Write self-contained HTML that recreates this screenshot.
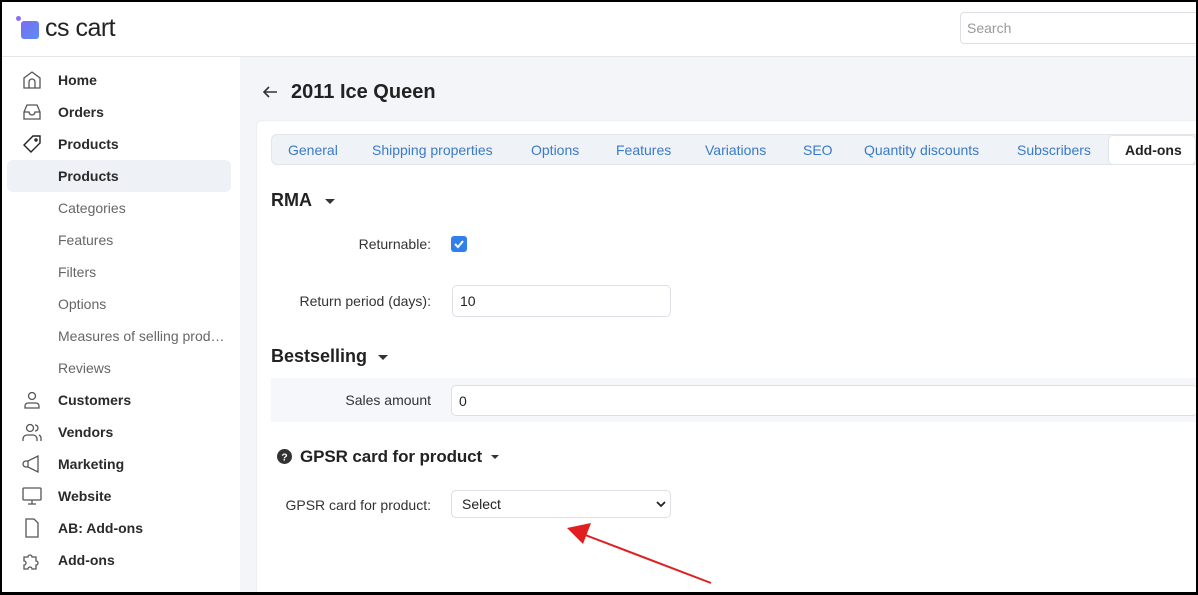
<!DOCTYPE html>
<html><head><meta charset="utf-8"><style>
*{box-sizing:border-box;margin:0;padding:0}
body{width:1198px;height:595px;overflow:hidden;position:relative;background:#fff;font-family:"Liberation Sans",sans-serif;color:#222}
.a{position:absolute}
.frame{position:absolute;left:0;top:0;width:1198px;height:595px;border:2px solid #000;border-bottom-width:3px;pointer-events:none;z-index:10}
.nav{font-size:14px;font-weight:bold;color:#2a2a2a}
.sub{font-size:14px;color:#666}
.ic{position:absolute;left:22px}
.tab{position:absolute;top:142px;font-size:14px;color:#3a7bc8}
.lbl{font-size:14px;color:#333;text-align:right}
.inp{position:absolute;background:#fff;border:1px solid #dcdfe4;border-radius:5px;font-size:14px;padding-left:7px;color:#222}
</style></head><body>
<div class="frame"></div>
<div class="a" style="left:0;top:0;width:1198px;height:57px;border-bottom:1px solid #e4e6ea;background:#fff"></div>
<div class="a" style="left:16px;top:16px;width:5px;height:5px;border-radius:50%;background:#8a6ff0"></div>
<div class="a" style="left:21px;top:21px;width:18px;height:18px;border-radius:3px;background:linear-gradient(135deg,#7b6cf2,#5b8cf5)"></div>
<div class="a" style="left:45px;top:14px;font-size:25px;color:#222;letter-spacing:-0.5px">cs cart</div>
<div class="a" style="left:960px;top:12px;width:240px;height:32px;border:1px solid #dcdfe4;border-radius:4px;font-size:14px;color:#999;padding:7px 6px">Search</div>
<div class="a" style="left:240px;top:57px;width:958px;height:538px;background:#f4f5f8"></div>
<div class="a" style="left:7px;top:160px;width:224px;height:32px;border-radius:6px;background:#eef1f5"></div>
<svg class="ic" style="top:70px" width="20" height="20" viewBox="0 0 20 20" fill="none" stroke="#555" stroke-width="1.3"><path d="M2 8L10 2l8 6v10H2z"/><path d="M7 18v-6a3 3 0 0 1 6 0v6"/></svg>
<svg class="ic" style="top:102px" width="20" height="20" viewBox="0 0 20 20" fill="none" stroke="#555" stroke-width="1.3"><path d="M5 3h10l3 7v7H2v-7z"/><path d="M2 10h5a3 3 0 0 0 6 0h5"/></svg>
<svg class="ic" style="top:134px" width="20" height="20" viewBox="0 0 20 20" fill="none" stroke="#222" stroke-width="1.4"><path d="M11 2h7v7l-9 9-7-7z"/><circle cx="14" cy="6" r="1"/></svg>
<svg class="ic" style="top:390px" width="20" height="20" viewBox="0 0 20 20" fill="none" stroke="#555" stroke-width="1.3"><circle cx="10" cy="6" r="3.5"/><path d="M3 18v-2a3 3 0 0 1 3-3h8a3 3 0 0 1 3 3v2z"/></svg>
<svg class="ic" style="top:422px" width="20" height="20" viewBox="0 0 20 20" fill="none" stroke="#555" stroke-width="1.3"><circle cx="8" cy="6" r="3.5"/><path d="M1 19v-2a4 4 0 0 1 4-4h6a4 4 0 0 1 4 4v2M13 3a3 3 0 0 1 0 6M17 13a4 4 0 0 1 2 4v2"/></svg>
<svg class="ic" style="top:454px" width="20" height="20" viewBox="0 0 20 20" fill="none" stroke="#555" stroke-width="1.3"><path d="M6 7h-2a3 3 0 0 0 0 6h2l10 5V2z"/><path d="M6 7v6"/></svg>
<svg class="ic" style="top:486px" width="20" height="20" viewBox="0 0 20 20" fill="none" stroke="#555" stroke-width="1.3"><rect x="1" y="2" width="18" height="12" rx="1"/><path d="M10 14v4M6 18h8"/></svg>
<svg class="ic" style="top:518px" width="20" height="20" viewBox="0 0 20 20" fill="none" stroke="#555" stroke-width="1.3"><path d="M4 1h8l4 4v14H4z"/></svg>
<svg class="ic" style="top:550px" width="20" height="20" viewBox="0 0 20 20" fill="none" stroke="#555" stroke-width="1.3"><path d="M2 7h4a2 2 0 1 1 4 0h4v4a2 2 0 1 1 0 4v4h-4a2 2 0 1 0-4 0H2v-4a2 2 0 1 0 0-4z"/></svg>
<div class="a nav" style="left:58px;top:72px">Home</div>
<div class="a nav" style="left:58px;top:104px">Orders</div>
<div class="a nav" style="left:58px;top:136px">Products</div>
<div class="a nav" style="left:58px;top:168px">Products</div>
<div class="a sub" style="left:58px;top:200px">Categories</div>
<div class="a sub" style="left:58px;top:232px">Features</div>
<div class="a sub" style="left:58px;top:264px">Filters</div>
<div class="a sub" style="left:58px;top:296px">Options</div>
<div class="a sub" style="left:58px;top:328px">Measures of selling prod…</div>
<div class="a sub" style="left:58px;top:360px">Reviews</div>
<div class="a nav" style="left:58px;top:392px">Customers</div>
<div class="a nav" style="left:58px;top:424px">Vendors</div>
<div class="a nav" style="left:58px;top:456px">Marketing</div>
<div class="a nav" style="left:58px;top:488px">Website</div>
<div class="a nav" style="left:58px;top:520px">AB: Add-ons</div>
<div class="a nav" style="left:58px;top:552px">Add-ons</div>
<svg class="a" style="left:262px;top:84px" width="16" height="16" viewBox="0 0 16 16" fill="none" stroke="#333" stroke-width="1.6"><path d="M15 8H2M7 3L2 8l5 5"/></svg>
<div class="a" style="left:291px;top:81px;font-size:20px;font-weight:bold;color:#222">2011 Ice Queen</div>
<div class="a" style="left:256px;top:120px;width:942px;height:475px;background:#fff;border-radius:6px 0 0 0;border:1px solid #eceef2"></div>
<div class="a" style="left:271px;top:134px;width:927px;height:31px;background:#eff2f6;border:1px solid #e2e6eb;border-radius:6px 0 0 6px"></div>
<div class="a" style="left:1108px;top:135px;width:88px;height:30px;background:#fff;border:1px solid #e2e6eb;border-radius:5px"></div>
<div class="tab" style="left:288px">General</div>
<div class="tab" style="left:372px">Shipping properties</div>
<div class="tab" style="left:531px">Options</div>
<div class="tab" style="left:616px">Features</div>
<div class="tab" style="left:705px">Variations</div>
<div class="tab" style="left:803px">SEO</div>
<div class="tab" style="left:864px">Quantity discounts</div>
<div class="tab" style="left:1017px">Subscribers</div>
<div class="tab" style="left:1125px;color:#222;font-weight:bold">Add-ons</div>
<div class="a" style="left:271px;top:190px;font-size:18px;font-weight:bold">RMA</div>
<div class="a" style="left:325px;top:199px;border:5px solid transparent;border-top-color:#333;border-bottom:0"></div>
<div class="a lbl" style="left:280px;top:236px;width:151px">Returnable:</div>
<div class="a" style="left:451px;top:236px;width:16px;height:16px;background:#2f80ed;border-radius:3px"></div>
<svg class="a" style="left:451px;top:236px" width="16" height="16" viewBox="0 0 16 16" fill="none" stroke="#fff" stroke-width="2"><path d="M4 8l3 3 5-6"/></svg>
<div class="a lbl" style="left:280px;top:293px;width:151px">Return period (days):</div>
<div class="inp" style="left:452px;top:285px;width:219px;height:32px;padding-top:7px">10</div>
<div class="a" style="left:271px;top:346px;font-size:18px;font-weight:bold">Bestselling</div>
<div class="a" style="left:378px;top:355px;border:5px solid transparent;border-top-color:#333;border-bottom:0"></div>
<div class="a" style="left:271px;top:378px;width:927px;height:44px;background:#f5f7fa"></div>
<div class="a lbl" style="left:280px;top:392px;width:151px">Sales amount</div>
<div class="inp" style="left:451px;top:385px;width:747px;height:31px;padding-top:7px">0</div>
<svg class="a" style="left:277px;top:449px" width="15" height="15" viewBox="0 0 16 16"><circle cx="8" cy="8" r="8" fill="#333"/><text x="8" y="12" font-size="11" font-weight="bold" fill="#fff" text-anchor="middle" font-family="Liberation Sans">?</text></svg>
<div class="a" style="left:300px;top:447px;font-size:17px;font-weight:bold;letter-spacing:-0.1px">GPSR card for product</div>
<div class="a" style="left:491px;top:455px;border:4px solid transparent;border-top-color:#333;border-bottom:0"></div>
<div class="a lbl" style="left:260px;top:497px;width:171px">GPSR card for product:</div>
<div class="inp" style="left:451px;top:490px;width:220px;height:28px;padding:5px 10px">Select</div>
<svg class="a" style="left:656px;top:500px" width="10" height="8" viewBox="0 0 10 8" fill="none" stroke="#222" stroke-width="1.8"><path d="M1 2l4 4 4-4"/></svg>
<svg class="a" style="left:560px;top:520px" width="160" height="70" viewBox="0 0 160 70"><path d="M151 63L20 13" stroke="#e02020" stroke-width="2"/><path d="M7 8L31 3 23 24z" fill="#e02020"/></svg>
</body></html>
